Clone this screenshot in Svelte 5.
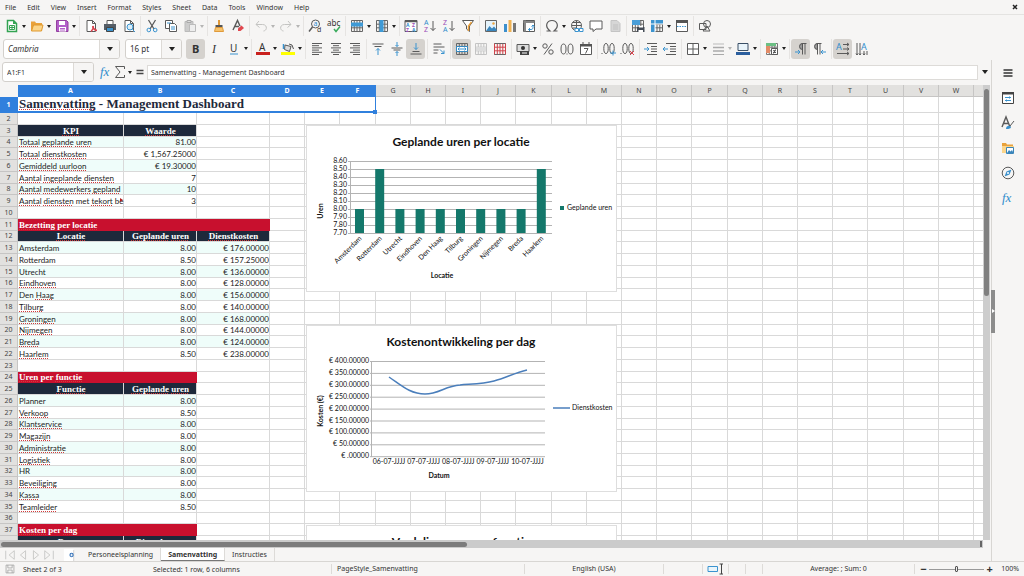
<script>
  const menus = ['File', 'Edit', 'View', 'Insert', 'Format', 'Styles', 'Sheet', 'Data', 'Tools', 'Window', 'Help'];

  // 14 x 14 drawings, k = dark stroke, b = blue stroke, g = pale stroke
  const page = '<path class="k" fill="#fff" d="M3 1.5h5.5l3 3v8h-8.500z"/><path class="k" d="M8.500 1.500v3h3"/>';
  const lines = (xs) => xs.map(([x, w], i) => `<path class="k" d="M${x} ${1.5 + i * 2.2}h${w}"/>`).join('');
  const grid = (c) => `<path stroke="${c}" fill="none" d="M1.500 1.500h11v11h-11zM1.500 5.200h11M1.500 8.800h11M4.300 1.500v11M7 1.500v11M9.800 1.500v11"/>`;
  const para = '<path class="k" d="M7.500 1.500h5M8.500 1.500v11M11 1.500v11"/><path d="M8.500 1.500a3 3 0 0 0 0 6z" fill="#999" stroke="#555"/>';

  const icons = {
    new: '<path d="M2.500 1.500h6l3 3v8h-9z" fill="#fff" stroke="#33a352" stroke-width="1.500"/><path d="M8 1.500v3.500h3.500z" fill="#33a352"/><path stroke="#33a352" d="M4.500 6.500h5v4h-5zM4.500 8.500h5M7 6.500v4" fill="none"/>',
    open: '<path d="M1 12V2.500h4l1 1.500h6v8z" fill="#e9a23b"/><path d="M1.500 12l2-6h9.500l-1.500 6z" fill="#fbd58a" stroke="#e0992f"/>',
    save: '<path d="M1.500 1.500h10l1.500 1.500v9.500h-11.500z" fill="#b35fc9" stroke="#93409f"/><path fill="#fff" d="M4 2h6v4H4zM4 8h7v4.500H4z"/><path stroke="#b35fc9" d="M5 9.500h5M5 11h5"/>',
    pdf: page + '<path d="M7 12.500c2-2 3-5 2-5s1 4 4 4" fill="none" stroke="#d8434e" stroke-width="1.500"/>',
    print: '<path d="M4 5V1.500h6V5" fill="#fff" class="k"/><path d="M1 5h12v6H1z" fill="#555d66"/><path d="M3.500 8.500h7v4h-7z" fill="#3d94cf" stroke="#444"/>',
    preview: page + '<circle cx="8" cy="8" r="3" fill="#d9edf8" class="b"/><path class="b" d="M10.500 10.500l2.500 2.500"/>',
    cut: '<path class="k" stroke-width="1.300" d="M3.500 1l5.500 9M10.500 1l-5.500 9"/><circle class="b" cx="3.800" cy="11" r="1.800"/><circle class="b" cx="10.200" cy="11" r="1.800"/>',
    copy: '<path class="k" fill="#fff" d="M1.500 1.500h7v8h-7z"/><path class="k" fill="#fff" d="M5.500 4.500h5l2 2v6h-7z"/><path class="b" d="M7 8h4M7 10h4M3 4h4"/>',
    paste: '<path d="M2 2.500h8v10H2z" fill="#ccc" stroke="#bbb"/><path fill="#eee" stroke="#bbb" d="M6.500 5.500h6v7h-6z"/><path stroke="#aaa" fill="#ddd" d="M4 1.500h4v2H4z"/>',
    clone: '<path d="M6 1h2v5H6z" fill="#e09a3a"/><path d="M3.500 6h7v2.500h-7z" fill="#555"/><path d="M3.500 8.500h7l1 4h-9z" fill="#f6c26b" stroke="#e09a3a"/>',
    clear: '<path class="k" stroke-width="1.400" d="M2 11L6.500 1.500 9 7M4 7.500h4"/><path fill="#e0474e" d="M7 9.500l3.500-3 2.500 2.500-3.500 3H7z"/>',
    undo: '<path class="g" d="M5 2L2 5.500h6.500c5 0 5 6 1 6.500M2 5.500l3.500 3"/>',
    redo: '<path class="g" d="M9 2l3 3.500H5.500c-5 0-5 6-1 6.500M12 5.500L8.500 8.500"/>',
    find: '<circle class="k" cx="7.500" cy="5" r="4"/><path class="k" stroke-width="1.500" d="M4.500 8l-3.500 4.500"/><text x="5.500" y="7" font-size="7" fill="#2f8ccc">a</text><text x="9" y="13" font-size="7" fill="#333">d</text>',
    spell: '<text x="0" y="7" font-size="8" fill="#333">abc</text><path d="M7 10l2 2.500 4-5" fill="none" stroke="#3aab5c" stroke-width="1.500"/>',
    row: grid('#666') + '<path d="M1 3.500h12v4H1z" fill="#3f9ad6"/>',
    col: grid('#666') + '<path d="M4.500 1h4v12h-4z" fill="#3f9ad6"/>',
    sort: '<path class="k" fill="#fff" d="M1 1.500h12v11H1z"/><path class="k" stroke-width="1.500" d="M1 2.500h12"/><text x="2" y="8" font-size="5" font-weight="700" fill="#2f8ccc">A</text><text x="2" y="12.500" font-size="5" font-weight="700" fill="#9a4fb8">Z</text><text x="8" y="8" font-size="5" font-weight="700" fill="#9a4fb8">Z</text><text x="8" y="12.500" font-size="5" font-weight="700" fill="#2f8ccc">A</text>',
    asc: '<text x="1" y="6" font-size="7" fill="#2f8ccc">A</text><text x="1" y="13" font-size="7" fill="#9a4fb8">Z</text><path class="k" d="M10 2v9.500M7.500 9l2.500 2.500L12.500 9"/>',
    desc: '<text x="1" y="6" font-size="7" fill="#9a4fb8">Z</text><text x="1" y="13" font-size="7" fill="#2f8ccc">A</text><path class="k" d="M10 2v9.500M7.500 9l2.500 2.500L12.500 9"/>',
    filter: '<path class="k" fill="#fff" d="M1.500 1.500h11L8.500 7v5.500l-3-2.500V7z"/><path d="M10.500 3L7.500 7v5" fill="none" stroke="#e9a03c" stroke-width="1.500"/>',
    image: '<path d="M1.500 1.500h11v11h-11z" fill="#e5f3fb" stroke="#666"/><path d="M2 12l3.500-5 2.500 2.500 2-2 2.500 3V12z" fill="#3a86bd"/><circle cx="9.500" cy="4.500" r="1.200" fill="#eea43d"/>',
    chart: '<path fill="#3d8fcc" d="M1 5h3v8H1z"/><path fill="#f0b252" d="M5.500 1h3v12h-3z"/><path fill="#777" d="M10 4h3v9h-3z"/>',
    pivot: '<path fill="#fff" class="k" d="M1.500 1.500h11v11h-11z"/><path stroke="#888" stroke-width="2" d="M1.500 3h11M3 1.500v11"/><path class="b" d="M6.500 10.500h2.500c1.500 0 2-1 2-2V6M8 9l-1.500 1.500L8 12M9.500 7.500L11 6l1.500 1.500"/>',
    omega: '<path class="k" stroke-width="1.200" d="M1.500 12h3.500c-6-5-3-10.500 2-10.500s8 5.500 2 10.500h3.500"/>',
    link: '<circle class="k" cx="6.500" cy="6.500" r="5"/><path class="k" d="M1.500 6.500h10M6.500 1.500v10M2.500 3.500h8M2.500 9h4"/><path class="b" fill="#fff" d="M5 9.500h3.500v3H5zM9.500 9.500h3.500v3H9.500z"/>',
    comment: '<path class="k" fill="#fff" d="M1 2h12v8H7l-3 2.500V10H1z"/>',
    header: '<path d="M3 1.500h6l3 3v8H3z" fill="#d6d6d6" stroke="#c4c4c4"/><path stroke="#c0c0c0" d="M5 6h5M5 8h5M5 10h5"/>',
    printarea: grid('#666') + '<path d="M1 1h8v5H1z" fill="#4a9ed8"/><path d="M6 8h7.500v5H6z" fill="#444b55"/><path d="M8 7h4v1.500H8zM7.500 11h4.500v2H7.500z" fill="#fff"/>',
    freeze: grid('#666') + '<path d="M1 1h12v4H1zM1 1h4v12H1z" fill="#3d94cf"/><path stroke="#fff" d="M5 1v12M1 5h12"/>',
    split: '<path class="k" fill="#fff" d="M1.500 1.500h11v11h-11z"/><path fill="#555" d="M1 1h12v3H1z"/><path class="b" stroke-dasharray="1.500 1" d="M2 7.500h10"/>',
    shapes: '<path class="k" d="M1.500 4.500h6.500v6H1.500z"/><circle class="k" cx="9" cy="5" r="3.500"/><path class="k" d="M5 12l4-5 3 5z"/>',
    bold: '<text x="3" y="11" font-size="11" font-weight="700" fill="#333">B</text>',
    italic: '<text x="4" y="11" font-size="12" font-style="italic" fill="#333" font-family="Liberation Serif">I</text>',
    underline: '<text x="3" y="9.500" font-size="10" fill="#333">U</text><path class="b" d="M3 12h8"/>',
    color: '<text x="3" y="8.500" font-size="10" fill="#333">A</text><path fill="#c9211e" d="M0 10h14v3H0z"/>',
    fill: '<path class="k" fill="#ddd" d="M4 3l6 1.500-1.500 5-5-2zM8 2l3 1 1.500 4"/><path class="b" stroke-width="1.500" d="M2.500 2v5"/><path fill="#ffff00" d="M0 10h14v3H0z"/>',
    left: lines([[2, 10], [2, 7], [2, 10], [2, 7], [2, 10], [2, 7]]),
    center: lines([[2, 10], [4, 6], [2, 10], [4, 6], [2, 10], [4, 6]]),
    right: lines([[2, 10], [5, 7], [2, 10], [5, 7], [2, 10], [5, 7]]),
    top: '<path class="k" d="M1.500 2h11M3.500 4.500h7"/><path class="b" d="M7 13V6.500M5 8.500l2-2 2 2"/>',
    middle: '<path class="k" d="M1.500 6h11M3.500 8h7"/><path class="b" d="M7 0v4.500M5.500 3L7 4.500 8.500 3M7 14V9.500M5.500 11L7 9.500 8.500 11"/>',
    bottom: '<path class="k" d="M1.500 12h11M3.500 9.500h7"/><path class="b" d="M7 1v6.500M5 5.500l2 2 2-2"/>',
    wrap: '<path class="k" d="M1.500 2h8M1.500 5h11M1.500 8h5M1.500 11h4"/><path class="b" d="M8 7.500l4 4M12 8.500v3H9"/>',
    mergecenter: grid('#666') + '<path fill="#fff" stroke="#3387c0" d="M1.500 4.500h11v5h-11z"/><path class="b" d="M3 7h8M4.500 5.500L3 7l1.500 1.500M9.500 5.500L11 7 9.500 8.500"/>',
    merge: grid('#c4c4c4') + '<path fill="#ddd" d="M2 5h10v4H2z"/>',
    unmerge: grid('#d0434a') + '<path stroke="#666" d="M1.500 1.500h11M1.500 12.500h11"/>',
    currency: '<path class="k" fill="#ddd" d="M1 2.500h12v7H1z"/><circle cx="7" cy="6" r="2" fill="#333"/><path fill="#444" d="M4 9h9v4H4z"/><path stroke="#fff" d="M6 11h5"/>',
    percent: '<circle class="k" cx="4" cy="4" r="2.200"/><circle class="k" cx="10" cy="10" r="2.200"/><path class="k" d="M11 1.500L3 12.500"/>',
    number: '<ellipse class="k" cx="3.500" cy="7" rx="2.500" ry="5"/><ellipse class="k" cx="10.500" cy="7" rx="2.500" ry="5"/><path class="k" d="M7 11.500v1"/>',
    date: '<path class="k" fill="#fff" d="M1.500 2.500h11v10h-11z"/><path fill="#555" d="M1 2h12v2.500H1zM3.500 0h1v3h-1zM9.500 0h1v3h-1z"/><path class="k" d="M5 6.500h4l-2.500 5"/>',
    adddec: '<path class="k" d="M0 11v1"/><ellipse class="k" cx="4" cy="6.500" rx="2.200" ry="5"/><ellipse class="k" cx="10" cy="6.500" rx="2.200" ry="5"/><path class="b" d="M8 11h6M11 8.500v5"/>',
    deldec: '<path class="k" d="M0 11v1"/><ellipse class="k" cx="4" cy="6.500" rx="2.200" ry="5"/><ellipse class="k" cx="10" cy="6.500" rx="2.200" ry="5"/><path stroke="#d8434e" d="M9 9l4 4M13 9l-4 4"/>',
    indent: '<path class="k" d="M3 1.500h10M7 4.500h6M7 7h6M7 9.500h6M3 12.500h10"/><path class="b" d="M0 7h5M3 5l2 2-2 2"/>',
    outdent: '<path class="k" d="M3 1.500h10M7 4.500h6M7 7h6M7 9.500h6M3 12.500h10"/><path class="b" d="M0 7h5M2 5L0 7l2 2"/>',
    borders: '<path class="k" fill="#fff" d="M1.500 1.500h11v11h-11zM1.500 7h11M7 1.500v11"/>',
    style: '<path stroke="#bbb" d="M2 2h11"/><path stroke="#aaa" stroke-width="1.500" d="M2 5.500h11M2 9h11"/><path stroke="#aaa" d="M2 12.500h11"/>',
    linecolor: '<path fill="#e9f4fb" stroke="#3a4f66" d="M2 1.500h10v7H2z"/><path fill="#2c5f9e" d="M0 10h14v3H0z"/>',
    cond: grid('#777') + '<path fill="#6cbf84" d="M1 1h10v3H1z"/><path fill="#e28b66" d="M1 4h4v7H1z"/><path fill="#fff" class="k" d="M6.500 6.500h6v6h-6z"/><path class="k" d="M8 8.700h3M8 10.500h3M10.500 7.500l-2 4"/>',
    ltr: para + '<path class="b" d="M1 10h5M4 8l2 2-2 2"/>',
    rtl: '<g transform="translate(-4 0)">' + para + '</g><path class="b" d="M8 10h5M10 8l-2 2 2 2"/>',
    horiz: '<text x="0" y="8" font-size="9" fill="#2f8ccc">A</text><path class="k" d="M7 2.500h6M11 1l2 1.500L11 4M7 7h6M11 5.500L13 7l-2 1.500M1 11.500h12M11 10l2 1.500L11 13"/>',
    vert: '<text x="6" y="8" font-size="9" fill="#2f8ccc">A</text><path class="k" d="M2 1v12M5 1v12M9 9v4M12 9v4M1 11.500L2 13l1-1.500M4 11.500L5 13l1-1.500M8 11.500L9 13l1-1.500"/>',
    menu: '<path stroke="#333" stroke-width="1.300" d="M2.500 4h9M2.500 7h9M2.500 10h9"/>',
    props: '<path fill="#fff" stroke="#444" d="M1.500 1.500h11v11h-11z"/><path fill="#444" d="M1 1h12v2.500H1z"/><path class="b" d="M4 6.500h6M4 9.500h6M8.500 5.500v2M5.500 8.500v2"/>',
    styles: '<path class="k" stroke-width="1.400" d="M1 11L5 1l4 10M2.500 7.500h5"/><path d="M13 5l-4 5" class="k"/><path d="M5 13c0-3 3-4 4.500-2.500S8 13.500 5 13z" fill="#3a90cc"/>',
    gallery: '<path d="M1 11V2h4l1 1.500h6V11z" fill="#e9a23b"/><path fill="#fbd58a" d="M1 5h12v7H1z"/><path fill="#fff" stroke="#3d86b8" d="M5.500 6.500h7v6h-7z"/><path fill="#3a86bd" d="M6 12l2-3 1.500 1.500L11 9l1.500 3z"/>',
    navigator: '<circle class="k" cx="7" cy="7" r="5.800"/><path fill="#3a90cc" d="M10.500 3.500L8.500 8.500 3.500 10.500 5.500 5.500z"/><circle cx="7" cy="7" r="1" fill="#fff"/>',
    fx: '<text x="1" y="11" font-size="13" font-style="italic" fill="#2f8ccc" font-family="Liberation Serif">fx</text>',
    sigma: '<path class="k" d="M11.500 4V1.500H2.500L7 7l-4.500 5.500h9V10"/>',
    equals: '<path stroke="#444" stroke-width="1.400" d="M3.500 5.500h7M3.500 8.500h7"/>',
    first: '<path class="g" d="M2 2v10M12 2L6 7l6 5z"/>',
    prev: '<path class="g" d="M10 2L4 7l6 5z"/>',
    next: '<path class="g" d="M4 2l6 5-6 5z"/>',
    last: '<path class="g" d="M12 2v10M2 2l6 5-6 5z"/>',
    addtab: '<path d="M1 0h12v14H1z" fill="#fff"/><path stroke="#ccc" d="M12.500 1v13"/><circle cx="10" cy="7" r="2.500" fill="#2f6fb8"/><path stroke="#fff" d="M8.500 7h3M10 5.500v3"/>',
    disk: '<path class="g2" d="M1.500 1.500h11v11h-11zM4 1.500v4h6v-4M4 12.500v-4h6v4"/>',
    selmode: '<path class="b" fill="#e9f5fb" d="M0 4.500h9.500v5H0z"/><path stroke="#444" fill="none" d="M11.500 2h3.500M11.500 12h3.500M13.500 2v10"/>',
  };

  // "name+" has a drop-down arrow, "name*" is pressed, "|" is a separator
  const standard = 'new+ open+ save+ | pdf print preview | cut copy paste+ | clone clear | undo+ redo+ | find spell | row+ col+ | sort asc desc filter | image chart pivot | omega+ link comment header | printarea freeze+ split | shapes'.split(' ');
  const formatting = 'bold* italic underline+ | color+ fill+ | left center right | top middle bottom* | wrap | mergecenter* merge unmerge | currency+ percent number date | adddec deldec | indent outdent | borders+ style+ linecolor+ | cond+ | ltr* rtl | horiz* vert'.split(' ');
  const dimmed = ['paste', 'undo', 'redo', 'style'];
  const deck = ['menu', 'props', 'styles', 'gallery', 'navigator', 'fx'];

  let viewWidth = $state(0);
  let viewHeight = $state(0);

  const colName = (i) => (i < 26 ? '' : String.fromCharCode(64 + Math.floor(i / 26))) + String.fromCharCode(65 + (i % 26));
  const colEdge = (i) => (i < 3 ? [124, 197, 270][i] : Math.round(270 + (i - 2) * 35.2));
  const rowEdge = (n) => (n === 0 ? 12 : Math.round(28 + (n - 1) * 11.75));

  // only as many columns and rows as the window shows, the last one may be partial and has no label
  const columns = $derived.by(() => {
    const list = [];
    for (let i = 0, left = 18; i < 6 || left < viewWidth; i++) {
      const right = colEdge(i);
      list.push({ name: i > 5 && right > viewWidth ? '' : colName(i), width: right - left });
      left = right;
    }
    return list;
  });

  // words that start with ~ fail the spell check
  const content = {
    1: { type: 'title', cells: ['~Samenvatting - Management Dashboard'] },
    3: { type: 'head', cells: ['~KPI', '~Waarde'] },
    4: { cells: ['~Totaal ~geplande ~uren', '81.00'] },
    5: { cells: ['~Totaal ~dienstkosten', '€ 1,567.25000'] },
    6: { cells: ['~Gemiddeld ~uurloon', '€ 19.30000'] },
    7: { cells: ['~Aantal ~ingeplande ~diensten', '7'] },
    8: { cells: ['~Aantal ~medewerkers ~gepland', '10'] },
    9: { cells: ['~Aantal ~diensten met ~tekort be', '3'], cut: true },
    11: { type: 'section', span: 3, cells: ['~Bezetting per ~locatie'] },
    12: { type: 'head', cells: ['~Locatie', '~Geplande ~uren', '~Dienstkosten'] },
    24: { type: 'section', span: 2, cells: ['~Uren per ~functie'] },
    25: { type: 'head', cells: ['~Functie', '~Geplande ~uren'] },
    37: { type: 'section', span: 2, cells: ['~Kosten per ~dag'] },
    38: { type: 'head', cells: ['~Datum', '~Dienstkosten'] },
  };

  const places = [
    ['Amsterdam', 8, 176], ['Rotterdam', 8.5, 157.25], ['Utrecht', 8, 136], ['~Eindhoven', 8, 128], ['Den ~Haag', 8, 156],
    ['~Tilburg', 8, 140], ['~Groningen', 8, 168], ['~Nijmegen', 8, 144], ['~Breda', 8, 124], ['~Haarlem', 8.5, 238],
  ];
  places.forEach(([name, hours, cost], i) => {
    content[13 + i] = { cells: [name, hours.toFixed(2), '€ ' + cost.toFixed(5)] };
  });
  ['Planner', '~Verkoop', '~Klantservice', '~Magazijn', '~Administratie', '~Logistiek', 'HR', '~Beveiliging', '~Kassa', '~Teamleider'].forEach((name, i) => {
    content[26 + i] = { cells: [name, i === 1 || i === 9 ? '8.50' : '8.00'] };
  });

  const rows = $derived.by(() => {
    const list = [];
    for (let n = 1; rowEdge(n - 1) < viewHeight; n++) {
      const row = content[n] ?? { cells: [] };
      const type = row.type ?? 'data';
      const span = type === 'title' ? 6 : row.span ?? 1;
      const banded = type === 'data' && row.cells.length > 0 && (n < 10 || n > 25 ? n % 2 === 0 : n % 2 === 1);
      const rest = columns.length - (row.cells.length ? row.cells.length + span - 1 : 0);
      list.push({ ...row, n, type, span, banded, rest, partial: rowEdge(n) > viewHeight, height: rowEdge(n) - rowEdge(n - 1) });
    }
    return list;
  });

  const words = (text) => text.split(' ').map((w) => ({ bad: w[0] === '~', text: w.replace('~', '') }));

  const hourTicks = Array.from({ length: 10 }, (_, i) => (8.6 - i * 0.1).toFixed(2));
  const costTicks = Array.from({ length: 9 }, (_, i) => (i === 8 ? '€ .00000' : `€ ${400 - i * 50}.00000`));
  const days = ['06-07-JJJJ', '07-07-JJJJ', '08-07-JJJJ', '09-07-JJJJ', '10-07-JJJJ'];

  let font = $state('Cambria');
  let size = $state('16 pt');
  let range = $state('A1:F1');
  let formula = $state('Samenvatting - Management Dashboard');
  let zoom = $state(50);
  let sheet = $state('Samenvatting');
</script>

{#snippet icon(name)}
  <svg class="icon" viewBox="0 0 14 14" aria-hidden="true">{@html icons[name]}</svg>
{/snippet}

{#snippet tools(items)}
  {#each items as item}
    {@const name = item.replace(/[+*]/, '')}
    {#if item === '|'}
      <span class="sep"></span>
    {:else}
      <button class="tool" class:pressed={item.endsWith('*')} aria-label={name}>{@render icon(name)}</button>
      {#if item.endsWith('+')}
        <button class="drop" class:dim={dimmed.includes(name)} aria-label="{name} options"></button>
      {/if}
    {/if}
  {/each}
{/snippet}

<div class="app">
  <nav class="menubar">
    {#each menus as menu}
      <button>{menu}</button>
    {/each}
    <button class="close" aria-label="Close">
      <svg viewBox="0 0 6 6"><path d="M1 1l4 4M5 1l-4 4" stroke="#222" stroke-width="1.500" /></svg>
    </button>
  </nav>

  <div class="toolbar standard">{@render tools(standard)}</div>
  <div class="toolbar">
    <div class="combo font-name">
      <input aria-label="Font name" bind:value={font} />
      <button aria-label="Font list"></button>
    </div>
    <div class="combo font-size">
      <input aria-label="Font size" bind:value={size} />
      <button aria-label="Size list"></button>
    </div>
    {@render tools(formatting)}
  </div>

  <div class="work">
    <main>
      <div class="formulabar">
        <div class="combo name-box">
          <input aria-label="Name box" bind:value={range} />
          <button aria-label="Named ranges"></button>
        </div>
        <button class="tool slim" aria-label="Function wizard">{@render icon('fx')}</button>
        <button class="tool slim" aria-label="Sum">{@render icon('sigma')}</button>
        <button class="drop" aria-label="Sum options"></button>
        <button class="tool slim" aria-label="Formula">{@render icon('equals')}</button>
        <input class="formula" aria-label="Input line" bind:value={formula} />
        <button class="expand" aria-label="Expand"></button>
      </div>

      <div class="view">
        <div class="sheet" bind:clientWidth={viewWidth} bind:clientHeight={viewHeight}>
          <table>
            <colgroup>
              <col class="numbers" />
              {#each columns as col}
                <col style="width: {col.width}px" />
              {/each}
            </colgroup>
            <thead>
              <tr>
                <th class="corner"></th>
                {#each columns as col, i}
                  <th class:selected={i < 6}>{col.name}</th>
                {/each}
              </tr>
            </thead>
            <tbody>
              {#each rows as row}
                <tr class={row.type} class:banded={row.banded} style="height: {row.height}px">
                  <th class:selected={row.n === 1}>{row.partial ? '' : row.n}</th>
                  {#each row.cells as cell, i}
                    <td class="filled" class:value={i > 0} colspan={i === 0 ? row.span : 1}>
                      {#each words(cell) as word, w}{w ? ' ' : ''}<span class:bad={word.bad}>{word.text}</span>{/each}
                      {#if row.cut && i === 0}<i class="cut"></i>{/if}
                      {#if row.type === 'title'}<i class="handle"></i>{/if}
                    </td>
                  {/each}
                  {#each { length: row.rest } as _}
                    <td></td>
                  {/each}
                </tr>
              {/each}
            </tbody>
          </table>

          <svg class="object first" viewBox="0 0 311 167">
            <text class="title" x="155" y="21">Geplande uren per locatie</text>
            {#each hourTicks as tick, i}
              <path class="rule" d="M42 {36.5 + i * 8}H246" />
              <text class="tick" x="41" y={38 + i * 8}>{tick}</text>
            {/each}
            <path class="rule" d="M44.500 36V109" />
            {#each places as [name, hours], i}
              <rect x={49 + i * 20.2} y={108 - (hours - 7.7) * 80} width="9" height={(hours - 7.7) * 80} fill="#14786b" />
              <text class="tick" transform="translate({56 + i * 20.2} 114) rotate(-45)">{name.replace('~', '')}</text>
            {/each}
            <text class="axis" x="136" y="153">Locatie</text>
            <text class="axis" transform="translate(17 86) rotate(-90)">Uren</text>
            <rect x="254" y="81" width="4" height="4" fill="#14786b" />
            <text x="261" y="85">Geplande uren</text>
          </svg>

          <svg class="object second" viewBox="0 0 311 167">
            <text class="title" x="155" y="21">Kostenontwikkeling per dag</text>
            {#each costTicks as tick, i}
              <path class="rule" d="M64 {36.5 + i * 11.9}H239" />
              <text class="tick" x="63" y={38 + i * 11.9}>{tick}</text>
            {/each}
            <path class="rule" d="M65.500 36V132" />
            <path d="M83 52C95 60 104 69 119 69C133 69 139 61 154 60C165 59 177 59 188 56C200 53 208 48 221 45" fill="none" stroke="#4a7ebb" stroke-width="1.500" />
            {#each days as day, i}
              <text class="day" x={83 + i * 34.6} y="139">{day}</text>
            {/each}
            <text class="axis" x="133" y="153">Datum</text>
            <text class="axis" transform="translate(17 86) rotate(-90)">Kosten (€)</text>
            <path d="M247 83H264" stroke="#4a7ebb" stroke-width="1.500" />
            <text x="266" y="85">Dienstkosten</text>
          </svg>

          <svg class="object third" viewBox="0 0 311 167">
            <text class="title" x="155" y="21">Verdeling uren per functie</text>
          </svg>
        </div>
        <div class="vscroll"><div class="thumb"></div></div>
      </div>
      <div class="hscroll"><div class="thumb"></div><div class="grip"></div></div>

      <div class="tabs">
        {#each ['first', 'prev', 'next', 'last'] as name}
          <button class="nav" aria-label="{name} sheet">{@render icon(name)}</button>
        {/each}
        <button class="add" aria-label="Add sheet">{@render icon('addtab')}</button>
        {#each ['Personeelsplanning', 'Samenvatting', 'Instructies'] as name}
          <button class="tab" class:active={sheet === name} onclick={() => (sheet = name)}>{name}</button>
        {/each}
      </div>
    </main>

    <aside>
      {#each deck as name}
        <button aria-label={name}>{@render icon(name)}</button>
      {/each}
      <div class="splitter"></div>
    </aside>
  </div>

  <footer>
    <span class="doc">{@render icon('disk')} Sheet 2 of 3</span>
    <span class="selection">Selected: 1 row, 6 columns</span>
    <span class="line">PageStyle_Samenvatting</span>
    <span class="line mid">English (USA)</span>
    <span class="line"></span>
    <span class="line mode">{@render icon('selmode')}</span>
    <span class="line"></span>
    <span class="line"></span>
    <span class="line mid">Average: ; Sum: 0</span>
    <span class="line zoom">
      <button aria-label="Zoom out">−</button>
      <input type="range" aria-label="Zoom" bind:value={zoom} />
      <button aria-label="Zoom in">+</button>
      <span class="percent">100%</span>
    </span>
  </footer>
</div>

<style>
  :global(body) {
    margin: 0;
    background: #f6f5f4;
  }
  .app {
    height: 100vh;
    display: flex;
    flex-direction: column;
    overflow: hidden;
    font: 7px 'Noto Sans', sans-serif;
    color: #333;
  }
  button,
  input {
    font: inherit;
    color: inherit;
    border: 0;
    margin: 0;
    padding: 0;
    background: none;
    min-width: 0;
  }
  .icon {
    display: block;
    width: 14px;
    height: 14px;
    overflow: visible;
    font-family: 'Noto Sans', sans-serif;
  }
  .icon :global(.k) {
    stroke: #5a5a5a;
  }
  .icon :global(.b) {
    stroke: #3a93cf;
  }
  .icon :global(.g) {
    stroke: #c4c4c2;
    fill: none;
  }
  .icon :global(.g2) {
    stroke: #999;
    fill: none;
  }
  .icon :global(.k:not([fill])),
  .icon :global(.b:not([fill])) {
    fill: none;
  }

  .menubar {
    display: flex;
    gap: 11px;
    height: 14px;
    padding: 0 5px;
    border-bottom: 1px solid #e4e3e1;
  }
  .close {
    margin-left: auto;
    padding-right: 1px;
  }
  .close svg {
    display: block;
    width: 6px;
    height: 6px;
  }
  .toolbar {
    display: flex;
    align-items: center;
    height: 23px;
    padding-left: 3px;
  }
  .standard {
    height: 22px;
    padding-left: 2px;
  }
  .tool {
    width: 19px;
    height: 20px;
    border-radius: 3px;
    display: grid;
    place-items: center;
    flex: none;
  }
  .slim {
    width: 14px;
  }
  .pressed {
    background: #d5d2ce;
  }
  .drop {
    width: 6px;
    height: 20px;
    display: grid;
    place-items: center;
    flex: none;
  }
  .drop::before,
  .combo button::before,
  .expand::before {
    content: '';
    display: block;
    width: 0;
    margin: auto;
    border: 2px solid transparent;
    border-top: 3px solid #222;
    border-bottom: 0;
  }
  .combo button::before,
  .expand::before {
    border-width: 4px 3px 0;
  }
  .dim::before {
    opacity: 0.3;
  }
  .sep {
    width: 1px;
    height: 20px;
    margin: 0 1px 0 2px;
    background: #e6e4e2;
    flex: none;
  }
  .combo {
    display: flex;
    height: 18px;
    border: 1px solid #d3d0cc;
    border-radius: 3px;
    background: #fff;
    overflow: hidden;
    flex: none;
  }
  .combo input {
    flex: 1;
    padding-left: 4px;
  }
  .combo button {
    width: 20px;
    background: #f6f5f4;
    border-left: 1px solid #dddad6;
  }
  .toolbar .combo input {
    font-size: 8px;
  }
  .font-name {
    width: 115px;
    margin-right: 5px;
  }
  .font-name input {
    font-style: italic;
  }
  .font-size {
    width: 55px;
    margin-right: 4px;
  }
  .name-box {
    width: 90px;
    margin-right: 5px;
  }

  .work {
    flex: 1;
    min-height: 0;
    display: flex;
  }
  main {
    flex: 1;
    min-width: 0;
    display: flex;
    flex-direction: column;
  }
  .formulabar {
    display: flex;
    align-items: center;
    height: 25px;
    padding-left: 2px;
    box-sizing: border-box;
    padding-bottom: 1px;
  }
  .formula {
    flex: 1;
    height: 13px;
    padding-left: 3px;
    border: 1px solid #dddbd8;
    background: #fff;
  }
  .expand {
    width: 13px;
    height: 14px;
  }
  .view {
    flex: 1;
    min-height: 0;
    display: flex;
  }
  .sheet {
    flex: 1;
    min-width: 0;
    position: relative;
    overflow: hidden;
    background: #fff;
  }

  table {
    width: 1px;
    table-layout: fixed;
    border-spacing: 0;
  }
  .numbers {
    width: 18px;
  }
  th,
  td {
    box-sizing: border-box;
    padding: 0;
    border: solid #d9d9d9;
    border-width: 0 1px 1px 0;
    line-height: 10px;
    white-space: nowrap;
  }
  th {
    background: #e2e1df;
    border-color: #c6c5c4;
    font-size: 7px;
    font-weight: 400;
    color: #444;
  }
  thead tr {
    height: 12px;
  }
  th.selected {
    background: #3080dd;
    border-color: #3080dd;
    color: #fff;
    font-weight: 700;
  }
  .corner {
    background: #f6f5f4;
    border-color: #f6f5f4;
  }
  td {
    font: 8px/10px Lato, sans-serif;
    color: #1c1c1c;
  }
  td.filled {
    position: relative;
    padding-left: 1px;
  }
  td.value {
    text-align: right;
  }
  .banded .filled {
    background: #effdfa;
  }
  .head .filled,
  .section .filled,
  .title .filled {
    font-family: 'Liberation Serif', serif;
    font-size: 9px;
    font-weight: 700;
  }
  .head .filled {
    background: #1e293b;
    color: #fff;
    text-align: center;
  }
  .section .filled {
    background: #c8102e;
    border-color: #c8102e;
    color: #fff;
  }
  .title .filled {
    border: solid #3080dd;
    border-width: 0 1px 2px 0;
    font-size: 13px;
    line-height: 14px;
    color: #1e293b;
  }
  .bad {
    text-decoration: underline dotted #d23a3a 1px;
    text-underline-offset: 1px;
    text-decoration-skip-ink: none;
  }
  .cut {
    position: absolute;
    right: 0;
    top: 3px;
    border: 2px solid transparent;
    border-left: 3px solid #b02020;
    border-right: 0;
  }
  .handle {
    position: absolute;
    right: -2px;
    bottom: -3px;
    width: 4px;
    height: 4px;
    background: #3080dd;
  }

  .object {
    position: absolute;
    left: 306px;
    width: 311px;
    height: 167px;
    box-sizing: border-box;
    background: #fff;
    outline: 1px solid #dedede;
    outline-offset: -1px;
    font: 7px Lato, sans-serif;
    fill: #111;
  }
  .first {
    top: 40px;
  }
  .second {
    top: 240px;
  }
  .third {
    top: 440px;
  }
  .object .title {
    font-size: 12px;
    font-weight: 700;
    text-anchor: middle;
  }
  .rule {
    stroke: #b3b3b3;
  }
  .tick {
    text-anchor: end;
  }
  .day {
    text-anchor: middle;
  }
  .axis {
    font-weight: 700;
    text-anchor: middle;
  }

  .vscroll {
    width: 7px;
    background: #cdcdcd;
    padding-top: 4px;
    box-sizing: border-box;
    margin-right: 1px;
  }
  .vscroll .thumb {
    width: 5px;
    height: 46%;
    margin-left: 1px;
    border-radius: 3px;
    background: #808080;
  }
  .hscroll {
    display: flex;
    align-items: center;
    justify-content: space-between;
    height: 8px;
    margin-right: 8px;
    padding: 0 1px;
    background: #cbcbcb;
  }
  .hscroll .thumb {
    width: 47.5%;
    height: 5px;
    border-radius: 3px;
    background: #7c7c7c;
  }
  .grip {
    width: 2px;
    height: 6px;
    background: #666;
  }
  .tabs {
    display: flex;
    height: 13px;
    padding-left: 4px;
  }
  .nav {
    width: 13px;
  }
  .nav .icon,
  .add .icon {
    width: 12px;
    height: 12px;
  }
  .add {
    width: 16px;
    margin: 0 2px 0 7px;
  }
  .tab {
    padding: 0 7px;
    border-right: 1px solid #dddbd8;
  }
  .active {
    background: #fff;
    border-bottom: 1px solid #777;
    font-weight: 700;
  }

  aside {
    position: relative;
    width: 33px;
    box-sizing: border-box;
    border-left: 1px solid #d8d6d3;
    display: flex;
    flex-direction: column;
    align-items: center;
  }
  aside button {
    height: 25px;
  }
  .splitter {
    position: absolute;
    left: -1px;
    top: 46%;
    width: 4px;
    height: 43px;
    background: #8c8c8c;
  }
  .splitter::before {
    content: '';
    position: absolute;
    left: 1px;
    top: 19px;
    border: 2px solid transparent;
    border-left: 3px solid #fff;
    border-right: 0;
  }

  footer {
    display: grid;
    grid-template-columns: 150fr 181fr 193fr 139fr 39fr 26fr 17fr 17fr 152fr 110fr;
    align-items: center;
    height: 14px;
    border-top: 1px solid #d8d6d3;
  }
  .doc {
    display: flex;
    align-items: center;
    gap: 8px;
    padding-left: 5px;
  }
  .doc .icon {
    width: 10px;
    height: 10px;
  }
  .selection {
    padding-left: 3px;
  }
  .line {
    min-width: 0;
    height: 10px;
    line-height: 10px;
    padding-left: 5px;
    border-left: 1px solid #dddbd8;
  }
  .mid {
    padding: 0;
    text-align: center;
  }
  .mode {
    display: flex;
    align-items: center;
  }
  .zoom {
    display: flex;
    align-items: center;
    gap: 2px;
  }
  .zoom button {
    width: 7px;
    font-size: 11px;
    font-weight: 700;
    line-height: 10px;
  }
  .zoom input {
    appearance: none;
    flex: 1;
    height: 7px;
    background: linear-gradient(#999, #999) center / 100% 1px no-repeat;
  }
  .zoom input::-webkit-slider-thumb {
    appearance: none;
    width: 3px;
    height: 6px;
    box-sizing: border-box;
    border: 1px solid #555;
    border-radius: 1px;
    background: #eee;
  }
  .percent {
    padding: 0 5px 0 6px;
  }
</style>
